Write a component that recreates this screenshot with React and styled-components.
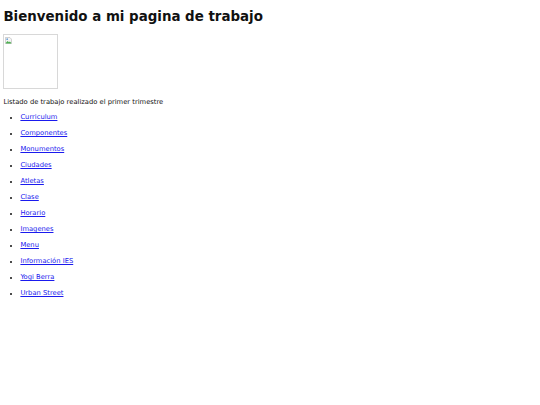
import React from 'react';
import styled, { createGlobalStyle } from 'styled-components';

const Global = createGlobalStyle`
  html, body {
    margin: 0;
    background: #fff;
  }
  body {
    padding: 9px 3.4px;
    font-family: "DejaVu Sans", Verdana, sans-serif;
    font-size: 6.75px;
    color: #111;
  }
`;

const Title = styled.h1`
  margin: 0 0 9px;
  font-size: 13.4px;
  font-weight: bold;
  line-height: 15.7px;
`;

const Broken = styled.div`
  position: relative;
  width: 53px;
  height: 53px;
  border: 1px solid #d8d8d8;
  box-sizing: content-box;
`;

const BrokenIcon = styled.svg`
  position: absolute;
  top: 2px;
  left: 1px;
`;

const Intro = styled.p`
  margin: 9.5px 0 7px;
  line-height: 8px;
`;

const List = styled.ul`
  margin: 0;
  padding-left: 17px;
  list-style: disc;
`;

const Item = styled.li`
  height: 16px;
  line-height: 8px;
  &::marker {
    font-size: 5px;
  }
`;

const Link = styled.a`
  color: #1a1aee;
  text-decoration: underline;
`;

const items = [
  'Curriculum',
  'Componentes',
  'Monumentos',
  'Ciudades',
  'Atletas',
  'Clase',
  'Horario',
  'Imagenes',
  'Menu',
  'Información IES',
  'Yogi Berra',
  'Urban Street',
];

export default function App() {
  return (
    <>
      <Global />
      <Title>Bienvenido a mi pagina de trabajo</Title>
      <Broken>
        <BrokenIcon width="7" height="7" viewBox="0 0 16 16">
          <path d="M1 1h10l4 4v10H1z" fill="#f4f4f4" stroke="#9a9a9a" />
          <path d="M2 13l4-4 3 3 2-2 3 3v2H2z" fill="#4caf50" />
          <circle cx="5" cy="5" r="2" fill="#6aa0d8" />
        </BrokenIcon>
      </Broken>
      <Intro>Listado de trabajo realizado el primer trimestre</Intro>
      <List>
        {items.map((name) => (
          <Item key={name}>
            <Link href="#">{name}</Link>
          </Item>
        ))}
      </List>
    </>
  );
}
